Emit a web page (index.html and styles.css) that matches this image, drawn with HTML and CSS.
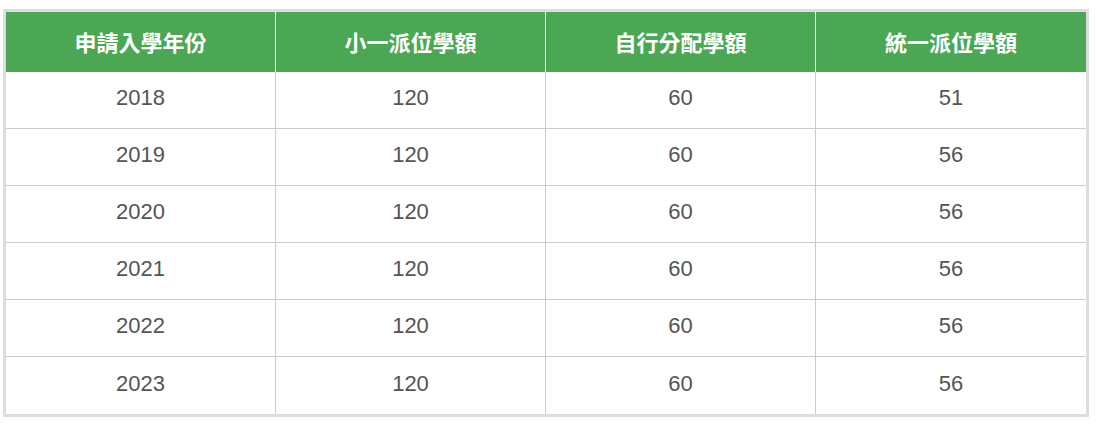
FILE: index.html
```html
<!DOCTYPE html>
<html lang="zh-Hant">
<head>
<meta charset="utf-8">
<title>學額</title>
<link rel="stylesheet" href="styles.css">
</head>
<body>
<div class="wrap">
<table class="quota">
  <thead>
    <tr>
      <th>申請入學年份</th>
      <th>小一派位學額</th>
      <th>自行分配學額</th>
      <th>統一派位學額</th>
    </tr>
  </thead>
  <tbody>
    <tr><td>2018</td><td>120</td><td>60</td><td>51</td></tr>
    <tr><td>2019</td><td>120</td><td>60</td><td>56</td></tr>
    <tr><td>2020</td><td>120</td><td>60</td><td>56</td></tr>
    <tr><td>2021</td><td>120</td><td>60</td><td>56</td></tr>
    <tr><td>2022</td><td>120</td><td>60</td><td>56</td></tr>
    <tr class="last"><td>2023</td><td>120</td><td>60</td><td>56</td></tr>
  </tbody>
</table>
</div>
</body>
</html>
```
FILE: styles.css
```css
html, body {
  margin: 0;
  padding: 0;
  background: #fff;
}
.wrap {
  padding: 9px 3px 0 3px;
}
.quota {
  width: 1086px;
  border: 3px solid #dddddd;
  border-collapse: separate;
  border-spacing: 0;
  table-layout: fixed;
  font-family: "Liberation Sans", Arial, "Noto Sans CJK TC", sans-serif;
}
.quota th,
.quota td {
  width: 25%;
  padding: 0;
  text-align: center;
  vertical-align: middle;
  box-sizing: border-box;
}
.quota th {
  height: 60px;
  background: #4ca755;
  color: #ffffff;
  font-family: "Noto Sans CJK TC", "Liberation Sans", sans-serif;
  font-weight: 700;
  font-size: 22px;
  border-right: 1px solid #ffffff;
  padding-bottom: 2px;
}
.quota th:last-child {
  border-right: none;
}
.quota td {
  height: 57px;
  color: #555555;
  font-size: 22px;
  border-right: 1px solid #cccccc;
  border-bottom: 1px solid #cccccc;
  padding-bottom: 4px;
}
.quota td:last-child {
  border-right: none;
}
.quota tr.last td {
  border-bottom: none;
}
```
